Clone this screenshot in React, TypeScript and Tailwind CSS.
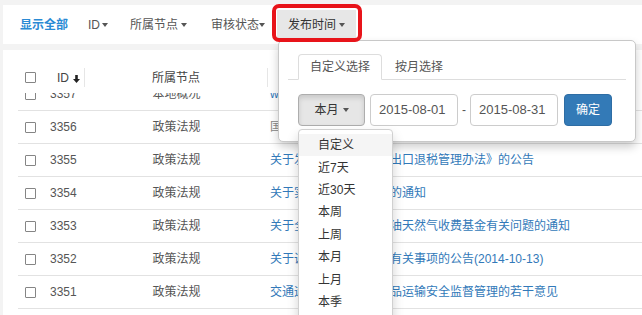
import React from "react";

type Row = {
  id: string;
  node: string;
  title: string;
  muted?: boolean;
};

const rows: Row[] = [
  { id: "3357", node: "本地概况", title: "www.chinatax.gov.cn" },
  { id: "3356", node: "政策法规", title: "国家税务总局关于发布有关税收规范性文件的公告", muted: true },
  { id: "3355", node: "政策法规", title: "关于发布《保税区货物出口退税管理办法》的公告" },
  { id: "3354", node: "政策法规", title: "关于实施纳税服务措施的通知" },
  { id: "3353", node: "政策法规", title: "关于全国范围内清理原油天然气收费基金有关问题的通知" },
  { id: "3352", node: "政策法规", title: "关于调整出口退税申报有关事项的公告(2014-10-13)" },
  { id: "3351", node: "政策法规", title: "交通运输关于危险化学品运输安全监督管理的若干意见" },
  { id: "3350", node: "政策法规", title: "关于进一步加强税收征管工作的通知" },
];

const ranges = ["自定义", "近7天", "近30天", "本周", "上周", "本月", "上月", "本季", "上季", "本年"];

function Caret({ className = "" }: { className?: string }) {
  return (
    <span
      className={`inline-block h-0 w-0 border-x-[3.5px] border-t-[4px] border-x-transparent border-t-[#555] ${className}`}
    />
  );
}

function Checkbox() {
  return <span className="block h-[11px] w-[11px] rounded-[1px] border border-[#858585] bg-white" />;
}

function DateFilter() {
  return (
    <div className="absolute left-[1px] top-full z-10 w-[358px] rounded-[5px] border border-[#c8c8c8] bg-white px-[9px] pb-[15px] pt-[13px] shadow-[0_5px_10px_rgba(0,0,0,0.2)]">
      <div className="flex h-[26px] border-b border-[#ddd] pl-[10px]">
        <div className="-mb-px flex h-[26px] items-center rounded-t-[4px] border border-[#ddd] border-b-white bg-white px-[11px] text-[#555]">
          自定义选择
        </div>
        <div className="ml-[2px] flex h-[25px] items-center px-[11px] text-[#555]">按月选择</div>
      </div>

      <div className="mt-[14px] flex items-center pl-[10px]">
        <div className="relative">
          <button className="flex h-[32px] w-[67px] items-center justify-center gap-[4px] rounded-[4px] border border-[#adadad] bg-[#e6e6e6] text-[#333] shadow-[inset_0_3px_5px_rgba(0,0,0,0.125)]">
            本月
            <Caret className="border-t-[#333]" />
          </button>

          <ul className="absolute left-0 top-full mt-[3px] w-[95px] rounded-[4px] border border-[#d0d0d0] bg-white pt-[4px] shadow-[0_6px_12px_rgba(0,0,0,0.175)]">
            {ranges.map((label, index) => (
              <li
                key={label}
                className={`flex h-[22.4px] items-center pl-[19px] text-[#333] ${index === 0 ? "bg-[#f5f5f5]" : ""}`}
              >
                {label}
              </li>
            ))}
          </ul>
        </div>

        <div className="ml-[5px] flex h-[32px] w-[88px] items-center rounded-[4px] border border-[#ccc] pl-[8px] text-[13px] text-[#555]">
          2015-08-01
        </div>
        <span className="mx-[4px] text-[#555]">-</span>
        <div className="flex h-[32px] w-[88px] items-center rounded-[4px] border border-[#ccc] pl-[8px] text-[13px] text-[#555]">
          2015-08-31
        </div>
        <button className="ml-[6px] h-[32px] w-[48px] rounded-[4px] border border-[#2e6da4] bg-[#337ab7] text-white">
          确定
        </button>
      </div>
    </div>
  );
}

export default function App() {
  return (
    <div className="h-[315px] overflow-hidden bg-[#f3f3f3] pl-[3px] pt-[5px] font-['Liberation_Sans','Noto_Sans_CJK_SC',sans-serif] text-[12px]">
      <nav className="relative z-20 flex h-[39px] items-start bg-white pl-[7px] pt-[5px] text-[#555]">
        <a className="flex h-[30px] items-center px-[10px] font-bold text-[#2a8ad4]">显示全部</a>
        <a className="flex h-[30px] items-center px-[10px]">
          ID
          <Caret className="ml-[2px]" />
        </a>
        <a className="ml-[2px] flex h-[30px] items-center px-[10px]">
          所属节点
          <Caret className="ml-[3px]" />
        </a>
        <a className="ml-[4px] flex h-[30px] items-center px-[10px]">
          审核状态
          <Caret />
        </a>
        <div className="relative ml-[2px]">
          <a className="flex h-[30px] items-center bg-[#e7e7e7] px-[11px] text-[#333]">
            发布时间
            <Caret className="ml-[3px] border-t-[#333]" />
          </a>
          <span className="pointer-events-none absolute -bottom-[2px] -left-[5px] -right-[6px] -top-[6px] z-30 rounded-[7px] border-[4px] border-[#e8141a]" />
          <DateFilter />
        </div>
      </nav>

      <section className="mt-[6px] flex h-[265px] flex-col bg-white pl-[15px] pt-[12px]">
        <div className="flex h-[31px] shrink-0 items-center text-[#444]">
          <div className="w-[25px] pl-[7px]">
            <Checkbox />
          </div>
          <div className="flex w-[41px] items-center pl-[14px]">
            ID
            <svg width="7" height="8" viewBox="0 0 7 8" className="ml-[4px] mt-[3px]">
              <path d="M2.2 0h2.6v4H7L3.5 8 0 4h2.2z" fill="#222" />
            </svg>
          </div>
          <span className="h-[19px] w-px bg-[#e6e6e6]" />
          <div className="w-[182px] text-center">所属节点</div>
          <span className="h-[19px] w-px bg-[#e6e6e6]" />
          <div className="flex-1" />
        </div>

        <div className="flex-1 overflow-hidden">
          <div className="-mt-[15px]">
            {rows.map((row) => (
              <div key={row.id} className="flex h-[33px] items-center border-b border-[#e2e2e2] text-[#555]">
                <div className="w-[25px] pl-[7px]">
                  <Checkbox />
                </div>
                <div className="w-[42px] pl-[7px]">{row.id}</div>
                <div className="w-[183px] text-center">{row.node}</div>
                <div
                  className={`flex-1 whitespace-nowrap pl-[2px] ${row.muted ? "text-[#888]" : "text-[#3279b9]"}`}
                >
                  {row.title}
                </div>
              </div>
            ))}
          </div>
        </div>
      </section>
    </div>
  );
}
